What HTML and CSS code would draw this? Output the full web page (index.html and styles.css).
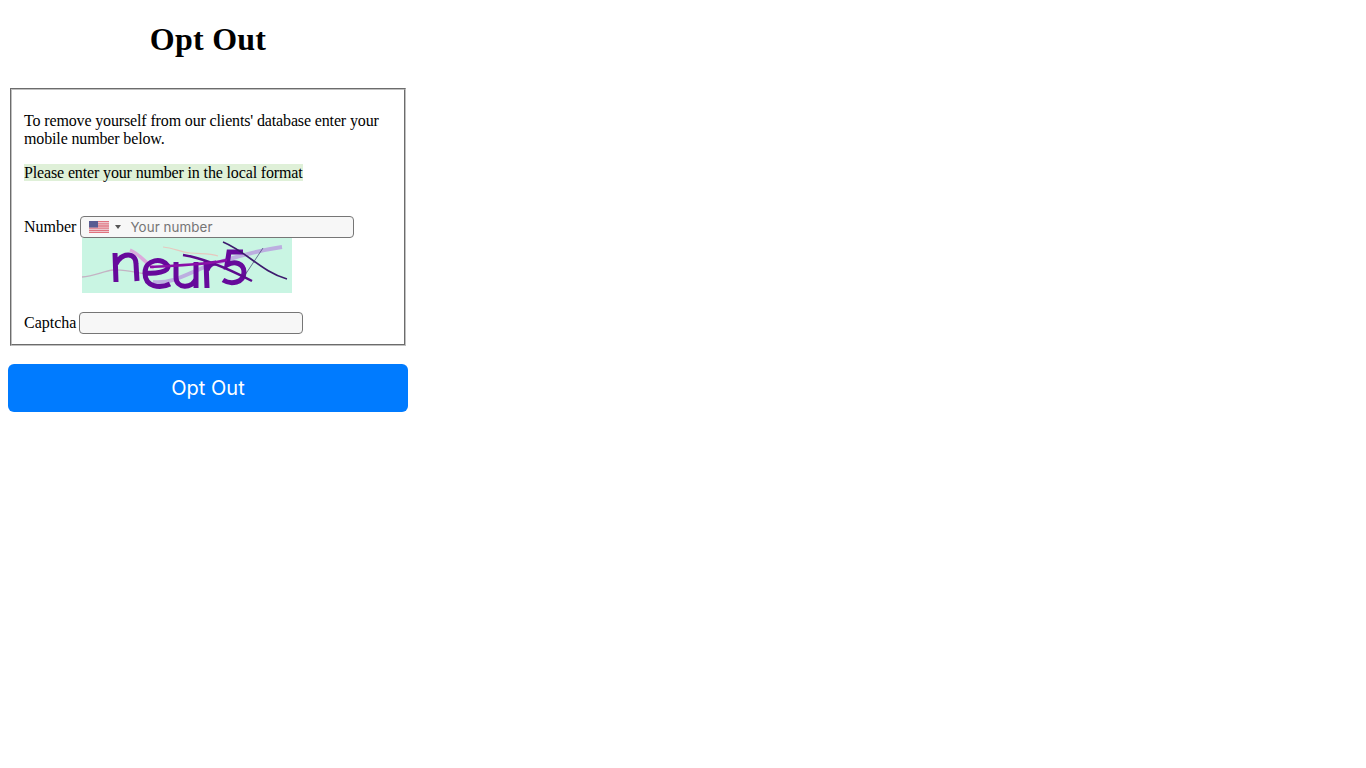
FILE: index.html
```html
<!DOCTYPE html>
<html lang="en">
<head>
    <meta charset="UTF-8">
    <meta name="viewport" content="width=device-width, initial-scale=1.0">
    <title>Opt Out</title>
    <link rel="stylesheet" href="styles.css">
</head>
<body>
    <div class="wrapper">
        <h1>Opt Out</h1>
        <form id="optOutForm">
            <fieldset class="box">
                <p>To remove yourself from our clients' database enter your mobile number below.</p>
                <p class="hint-row"><span class="hint">Please enter your number in the local format</span></p>
                <div class="number-row">
                    <label for="number">Number</label>
                    <div class="phone-input">
                        <button type="button" class="flag-button">
                            <svg class="flag" width="20" height="12" viewBox="0 0 20 12">
                                <rect width="20" height="12" fill="#f0e4e8"/>
                                <path d="M0 .5h20M0 2.3h20M0 4.1h20M0 5.9h20M0 7.7h20M0 9.5h20M0 11.4h20" stroke="#e0737f" stroke-width="1.1"/>
                                <rect width="9" height="6.5" fill="#5a5d92"/>
                            </svg>
                            <span class="caret"></span>
                        </button>
                        <input type="tel" id="number" name="number" placeholder="Your number">
                    </div>
                </div>
                <div class="captcha-frame">
                    <svg class="captcha" width="210" height="55" viewBox="0 0 210 55">
                        <path d="M0 39C12 38 22 33 31 32C50 31 60 38 72 36" fill="none" stroke="#c4b3c4" stroke-width="1.3"/>
                        <path d="M81 9C92 10 98 14 108 15C120 16 128 15 136 18" fill="none" stroke="#e6c8bf" stroke-width="1.2"/>
                        <path d="M48 12C58 16 64 26 72 30" fill="none" stroke="#dca9dc" stroke-width="3.5"/>
                        <path d="M71 44C90 46 105 36 125 28C145 22 165 14 200 9" fill="none" stroke="#bcaee0" stroke-width="4"/>
                        <g fill="none" stroke="#66099b" stroke-width="5">
                            <path d="M33 15L34 44M34 26C40 14 54 14 54 26L55 43"/>
                            <path d="M63 35C73 36 87 34 86 28C81 19 63 21 63 35C63 49 78 51 88 46"/>
                            <path d="M94 24L94 39C94 51 110 51 114 41M114 24L114 50"/>
                            <path d="M124 23L125 50M125 32C127 27 130 25 134 25"/>
                            <path d="M161 14L147 14L145 27C153 22 162 26 162 34C162 45 149 47 141 42"/>
                        </g>
                        <path d="M101 17C120 20 145 30 170 43" fill="none" stroke="#5b0a8c" stroke-width="2.5"/>
                        <path d="M68 29C95 27 125 27 145 22" fill="none" stroke="#8a0fa8" stroke-width="2.5"/>
                        <path d="M141 4C165 14 180 34 205 41" fill="none" stroke="#3d1a6e" stroke-width="1.7"/>
                        <path d="M181 10L163 37" fill="none" stroke="#3d3a70" stroke-width="0.7"/>
                    </svg>
                </div>
                <div class="captcha-row">
                    <label for="captcha">Captcha</label>
                    <input type="text" id="captcha" name="captcha" class="captcha-input">
                </div>
            </fieldset>
            <button type="submit" class="submit-button">Opt Out</button>
        </form>
    </div>
</body>
</html>
```

FILE: styles.css
```css
body {
    margin: 8px;
    font-family: "Liberation Serif", "Times New Roman", serif;
    font-size: 16px;
    color: #000;
    background: #fff;
}

.wrapper {
    width: 400px;
}

h1 {
    margin: 12px 0 30px;
    font-size: 32px;
    line-height: 38px;
    letter-spacing: 0.25px;
    text-align: center;
}

.box {
    margin: 0 2px;
    padding: 22px 12px 10px;
    border: 2px groove #c0c0c0;
    min-width: 0;
}

.box p {
    margin: 0 0 16px;
    line-height: 18px;
    letter-spacing: -0.14px;
}

.box p.hint-row {
    margin-bottom: 34px;
}

.hint {
    background: #dff0d8;
}

.number-row,
.captcha-row {
    display: flex;
    align-items: center;
}

.number-row {
    gap: 4px;
}

.captcha-row {
    gap: 3px;
}

.phone-input {
    display: flex;
    align-items: center;
    width: 274px;
    height: 22px;
    box-sizing: border-box;
    border: 1px solid #767676;
    border-radius: 4px;
    background: #f7f7f7;
}

.flag-button {
    display: flex;
    align-items: center;
    padding: 0 0 0 8px;
    border: none;
    background: none;
}

.flag {
    display: block;
    filter: blur(0.3px);
}

.caret {
    width: 0;
    height: 0;
    margin-left: 6px;
    border-left: 3px solid transparent;
    border-right: 3px solid transparent;
    border-top: 4px solid #555;
}

.phone-input input {
    flex: 1;
    min-width: 0;
    margin-left: 9px;
    padding: 0;
    border: none;
    outline: none;
    background: none;
    font-family: Inter, sans-serif;
    font-size: 13.33px;
    letter-spacing: 0.1px;
}

.phone-input input::placeholder {
    color: #757575;
    opacity: 1;
}

.captcha-frame {
    width: 210px;
    height: 55px;
    margin: 0 0 19px 58px;
    overflow: hidden;
    background: #c9f5e3;
}

.captcha {
    display: block;
    filter: blur(0.4px);
}

.captcha-input {
    width: 224px;
    height: 22px;
    box-sizing: border-box;
    padding: 0 4px;
    border: 1px solid #767676;
    border-radius: 4px;
    background: #f7f7f7;
}

.submit-button {
    display: block;
    width: 400px;
    height: 48px;
    margin-top: 18px;
    border: none;
    border-radius: 6px;
    background: #007bff;
    color: #fff;
    font-family: Inter, sans-serif;
    font-size: 20px;
    cursor: pointer;
}
```
